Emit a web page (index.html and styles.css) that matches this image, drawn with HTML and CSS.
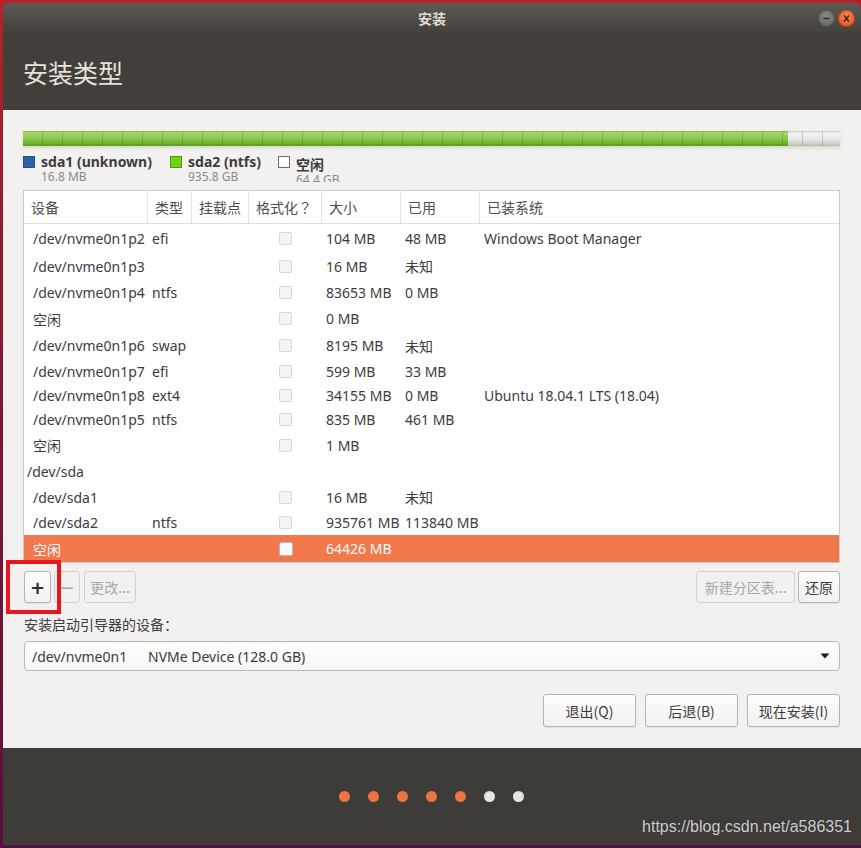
FILE: index.html
```html
<!DOCTYPE html>
<html lang="zh-CN">
<head>
<meta charset="utf-8">
<title>安装</title>
<link rel="stylesheet" href="styles.css">
</head>
<body>
<div class="window">
  <div class="titlebar">
    <span></span>
    <span class="title">安装</span>
    <div class="wm-buttons">
      <span class="wm-btn wm-min"><svg width="17" height="17" viewBox="0 0 17 17"><line x1="5.5" y1="8.5" x2="11.5" y2="8.5" stroke="#2e2c29" stroke-width="1.3"/></svg></span>
      <span class="wm-btn wm-close"><svg width="17" height="17" viewBox="0 0 17 17"><path d="M6 5.5 L11 11.5 M11 5.5 L6 11.5" stroke="#3a2218" stroke-width="1.3" fill="none"/></svg></span>
    </div>
  </div>
  <div class="header"><h1>安装类型</h1></div>
  <div class="content">
    <div class="pbar">
      <div class="pbar-used"></div>
      <div class="pbar-free"></div>
    </div>
    <div class="legend">
      <div class="legend-item">
        <span class="swatch blue"></span>
        <div><div class="lname">sda1 (unknown)</div><div class="lsize">16.8 MB</div></div>
      </div>
      <div class="legend-item">
        <span class="swatch green"></span>
        <div><div class="lname">sda2 (ntfs)</div><div class="lsize">935.8 GB</div></div>
      </div>
      <div class="legend-item clip">
        <span class="swatch free"></span>
        <div><div class="lname cjk">空闲</div><div class="lsize">64.4 GB</div></div>
      </div>
    </div>
    <div class="table">
      <div class="row thead">
        <div class="th">设备</div><div class="th">类型</div><div class="th">挂载点</div><div class="th">格式化<span class="qmark">？</span></div><div class="th">大小</div><div class="th">已用</div><div class="th last">已装系统</div>
      </div>
      <div class="row h29"><div class="c dev">/dev/nvme0n1p2</div><div class="c">efi</div><div class="c"></div><div class="c cbc"><span class="cb"></span></div><div class="c">104 MB</div><div class="c">48 MB</div><div class="c">Windows Boot Manager</div></div>
      <div class="row h26"><div class="c dev">/dev/nvme0n1p3</div><div class="c"></div><div class="c"></div><div class="c cbc"><span class="cb"></span></div><div class="c">16 MB</div><div class="c">未知</div><div class="c"></div></div>
      <div class="row h26"><div class="c dev">/dev/nvme0n1p4</div><div class="c">ntfs</div><div class="c"></div><div class="c cbc"><span class="cb"></span></div><div class="c">83653 MB</div><div class="c">0 MB</div><div class="c"></div></div>
      <div class="row h27"><div class="c dev">空闲</div><div class="c"></div><div class="c"></div><div class="c cbc"><span class="cb"></span></div><div class="c">0 MB</div><div class="c"></div><div class="c"></div></div>
      <div class="row h27"><div class="c dev">/dev/nvme0n1p6</div><div class="c">swap</div><div class="c"></div><div class="c cbc"><span class="cb"></span></div><div class="c">8195 MB</div><div class="c">未知</div><div class="c"></div></div>
      <div class="row h25"><div class="c dev">/dev/nvme0n1p7</div><div class="c">efi</div><div class="c"></div><div class="c cbc"><span class="cb"></span></div><div class="c">599 MB</div><div class="c">33 MB</div><div class="c"></div></div>
      <div class="row h23"><div class="c dev">/dev/nvme0n1p8</div><div class="c">ext4</div><div class="c"></div><div class="c cbc"><span class="cb"></span></div><div class="c">34155 MB</div><div class="c">0 MB</div><div class="c">Ubuntu 18.04.1 LTS (18.04)</div></div>
      <div class="row h25"><div class="c dev">/dev/nvme0n1p5</div><div class="c">ntfs</div><div class="c"></div><div class="c cbc"><span class="cb"></span></div><div class="c">835 MB</div><div class="c">461 MB</div><div class="c"></div></div>
      <div class="row h26"><div class="c dev">空闲</div><div class="c"></div><div class="c"></div><div class="c cbc"><span class="cb"></span></div><div class="c">1 MB</div><div class="c"></div><div class="c"></div></div>
      <div class="row h26"><div class="c disk">/dev/sda</div><div class="c"></div><div class="c"></div><div class="c"></div><div class="c"></div><div class="c"></div><div class="c"></div></div>
      <div class="row h26"><div class="c dev">/dev/sda1</div><div class="c"></div><div class="c"></div><div class="c cbc"><span class="cb"></span></div><div class="c">16 MB</div><div class="c">未知</div><div class="c"></div></div>
      <div class="row h25"><div class="c dev">/dev/sda2</div><div class="c">ntfs</div><div class="c"></div><div class="c cbc"><span class="cb"></span></div><div class="c">935761 MB</div><div class="c">113840 MB</div><div class="c"></div></div>
      <div class="row h27 selected"><div class="c dev">空闲</div><div class="c"></div><div class="c"></div><div class="c cbc"><span class="cb"></span></div><div class="c">64426 MB</div><div class="c"></div><div class="c"></div></div>
    </div>
    <div class="toolbar">
      <div class="tgroup">
        <span class="btn plus">+</span>
        <span class="btn minus disabled">−</span>
        <span class="btn change disabled">更改...</span>
      </div>
      <div class="tgroup">
        <span class="btn newtable disabled">新建分区表...</span>
        <span class="btn revert">还原</span>
      </div>
    </div>
    <div class="boot-label">安装启动引导器的设备：</div>
    <div class="select">
      <span class="sel-dev">/dev/nvme0n1</span>
      <span class="sel-name">NVMe Device (128.0 GB)</span>
      <svg class="sel-arrow" width="10" height="6" viewBox="0 0 10 6"><path d="M0.5 0.5 L9.5 0.5 L5 5.5 Z" fill="#1e1e1e"/></svg>
    </div>
    <div class="actions">
      <span class="btn act">退出(Q)</span>
      <span class="btn act">后退(B)</span>
      <span class="btn act">现在安装(I)</span>
    </div>
  </div>
  <div class="footer">
    <span class="dot on"></span><span class="dot on"></span><span class="dot on"></span><span class="dot on"></span><span class="dot on"></span><span class="dot"></span><span class="dot"></span>
  </div>
</div>
<div class="annotation"></div>
<div class="watermark">https://blog.csdn.net/a586351</div>
</body>
</html>
```
FILE: styles.css
```css
html, body {
  margin: 0;
  padding: 0;
}
body {
  width: 861px;
  height: 848px;
  overflow: hidden;
  position: relative;
  background: linear-gradient(180deg, #b2262b 0%, #8c1a2d 30%, #6e1535 70%, #55103f 100%);
  font-family: "Noto Sans", "Noto Sans CJK SC", sans-serif;
  font-size: 14px;
  color: #3c3c3c;
}
.window {
  margin: 3px 0 0 3px;
  width: 858px;
  height: 842px;
  display: flex;
  flex-direction: column;
  border-radius: 7px 7px 0 0;
  overflow: hidden;
}
.titlebar {
  height: 30px;
  flex: 0 0 30px;
  display: grid;
  grid-template-columns: 1fr auto 1fr;
  align-items: center;
  background: linear-gradient(180deg, #5e5b55 0%, #4b4843 70%, #44423d 100%);
}
.title {
  font-weight: bold;
  font-size: 14px;
  color: #dfdbd2;
  font-family: "Noto Sans CJK SC", sans-serif;
}
.wm-buttons {
  justify-self: end;
  display: flex;
  gap: 3px;
  padding-right: 6px;
  padding-top: 1px;
}
.wm-btn {
  width: 17px;
  height: 17px;
  border-radius: 50%;
  display: block;
}
.wm-btn svg { display: block; }
.wm-min {
  background: radial-gradient(circle at 50% 35%, #8a8882 0%, #6c6a65 70%, #5a5853 100%);
  box-shadow: inset 0 0 0 1px rgba(0,0,0,0.25);
}
.wm-close {
  background: radial-gradient(circle at 50% 35%, #f78a55 0%, #ea5a24 65%, #c9441a 100%);
  box-shadow: inset 0 0 0 1px rgba(0,0,0,0.2);
}
.header {
  height: 77px;
  flex: 0 0 77px;
  background: #423f3b;
  display: flex;
  align-items: center;
  padding-left: 20px;
}
.header h1 {
  margin: 0;
  font-weight: normal;
  font-size: 25px;
  color: #e6e2da;
  font-family: "Noto Sans CJK SC", sans-serif;
  line-height: 30px;
}
.content {
  flex: 0 0 638px;
  height: 638px;
  box-sizing: border-box;
  background: #f2f1f0;
  padding: 21px 21px 0 20px;
  display: flex;
  flex-direction: column;
}
.pbar {
  position: relative;
  display: flex;
  height: 15px;
  flex: 0 0 15px;
  box-shadow: 0 2px 3px rgba(120, 190, 60, 0.3);
}
.pbar::after {
  content: "";
  position: absolute;
  inset: 0;
  background: repeating-linear-gradient(90deg, transparent 0 19px, rgba(50, 90, 20, 0.22) 19px 20px);
  pointer-events: none;
}
.pbar-used {
  flex: 0 0 765px;
  background: linear-gradient(180deg, #7fb648 0%, #a2d96a 12%, #8cca4c 50%, #72b432 80%, #5c9424 100%);
}
.pbar-free {
  flex: 1;
  background: linear-gradient(180deg, #c8c8c8 0%, #f4f4f4 15%, #e6e6e6 55%, #cfcfcf 85%, #b5b5b5 100%);
}
.legend {
  margin-top: 7px;
  height: 32px;
  flex: 0 0 32px;
  display: grid;
  grid-template-columns: 147px 108px auto;
  align-items: start;
}
.legend-item {
  display: flex;
  align-items: flex-start;
  gap: 6px;
}
.legend-item.clip {
  height: 29px;
  overflow: hidden;
}
.swatch {
  width: 10px;
  height: 10px;
  margin-top: 3px;
  flex: 0 0 auto;
  box-sizing: content-box;
}
.swatch.blue { background: #2f62a8; border: 1px solid #234d86; }
.swatch.green { background: #73d216; border: 1px solid #4e9a06; }
.swatch.free { background: #ffffff; border: 1px solid #6e6e6e; }
.lname {
  font-weight: bold;
  font-size: 14px;
  line-height: 17px;
  color: #3c3c3c;
  white-space: nowrap;
}
.lname.cjk {
  padding-top: 3px;
}
.lsize {
  font-size: 12px;
  line-height: 14px;
  color: #8a8a8a;
  white-space: nowrap;
}
.table {
  margin-top: 5px;
  border: 1px solid #cbcbcb;
  background: #ffffff;
  display: flex;
  flex-direction: column;
}
.row {
  display: grid;
  grid-template-columns: 124px 44px 57px 73px 79px 79px 1fr;
  align-items: center;
  white-space: nowrap;
}
.thead {
  height: 32px;
  border-bottom: 1px solid #dedede;
  align-items: stretch;
}
.th {
  display: flex;
  align-items: center;
  padding-left: 7px;
  border-right: 1px solid #e4e4e4;
  color: #4e4e4e;
  font-family: "Noto Sans CJK SC", sans-serif;
  font-size: 14px;
}
.th .qmark { font-family: "Noto Sans CJK JP", sans-serif; }
.th.last { border-right: none; }
.h23 { height: 23px; }
.h25 { height: 25px; }
.h26 { height: 26px; }
.h27 { height: 27px; }
.h29 { height: 29px; }
.c {
  padding-left: 4px;
  overflow: visible;
}
.c.dev { padding-left: 9px; }
.c.disk { padding-left: 3px; }
.c.cbc {
  padding-left: 30px;
  display: flex;
  align-items: center;
}
.cb {
  display: block;
  width: 11px;
  height: 11px;
  border: 1px solid #d7d7d7;
  background: #f4f4f4;
  border-radius: 2px;
}
.selected {
  background: #f1784a;
  color: #ffffff;
}
.selected .cb {
  width: 12px;
  height: 12px;
  background: #fafafa;
  border-color: #b9b9b9;
}
.toolbar {
  margin-top: 8px;
  height: 32px;
  flex: 0 0 32px;
  display: flex;
  justify-content: space-between;
}
.tgroup {
  display: flex;
  gap: 3px;
}
.btn {
  box-sizing: border-box;
  height: 32px;
  display: flex;
  align-items: center;
  justify-content: center;
  border: 1px solid #b4b4b1;
  border-radius: 3px;
  background: linear-gradient(180deg, #fdfdfd 0%, #f1f1f0 100%);
  box-shadow: 0 1px 1px rgba(0,0,0,0.06);
  font-size: 14px;
  color: #3c3c3c;
  font-family: "Noto Sans CJK SC", sans-serif;
}
.btn.disabled {
  border-color: #d2d2d0;
  background: #f2f1f0;
  color: #a7a7a7;
  box-shadow: none;
}
.btn.plus {
  width: 27px;
  margin-left: 1px;
  font-size: 18px;
  font-weight: bold;
  color: #2e2e2e;
  font-family: "DejaVu Sans", sans-serif;
}
.btn.minus {
  width: 26px;
  font-size: 18px;
  font-family: "DejaVu Sans", sans-serif;
}
.btn.change { width: 52px; margin-left: 1px; }
.btn.newtable { width: 99px; }
.btn.revert { width: 42px; }
.boot-label {
  margin-top: 11px;
  line-height: 20px;
  height: 20px;
  padding-left: 1px;
  font-family: "Noto Sans CJK SC", sans-serif;
  color: #3c3c3c;
}
.select {
  margin-top: 7px;
  margin-left: 1px;
  height: 30px;
  flex: 0 0 30px;
  box-sizing: border-box;
  border: 1px solid #b9b9b7;
  border-radius: 4px;
  background: linear-gradient(180deg, #ffffff 0%, #f5f5f4 100%);
  display: grid;
  grid-template-columns: 116px 1fr auto;
  align-items: center;
  padding: 0 9px 0 7px;
}
.sel-arrow { display: block; }
.actions {
  margin-top: 23px;
  display: flex;
  justify-content: flex-end;
  gap: 9px;
}
.btn.act {
  width: 93px;
  height: 33px;
}
.footer {
  flex: 1;
  background: #3e3c38;
  display: flex;
  justify-content: center;
  align-items: flex-start;
  gap: 18px;
  padding-top: 43px;
  padding-right: 2px;
}
.dot {
  width: 11px;
  height: 11px;
  border-radius: 50%;
  background: #e4e4e2;
}
.dot.on { background: #ee7440; }
.annotation {
  position: absolute;
  left: 6px;
  top: 560px;
  width: 55px;
  height: 54px;
  box-sizing: border-box;
  border: 4px solid #e8161d;
}
.watermark {
  position: absolute;
  right: 9px;
  top: 817px;
  font-family: "Liberation Sans", sans-serif;
  font-size: 16px;
  line-height: 20px;
  color: #cfcfcf;
  text-shadow: 0 0 1px rgba(0,0,0,0.4);
}
```
